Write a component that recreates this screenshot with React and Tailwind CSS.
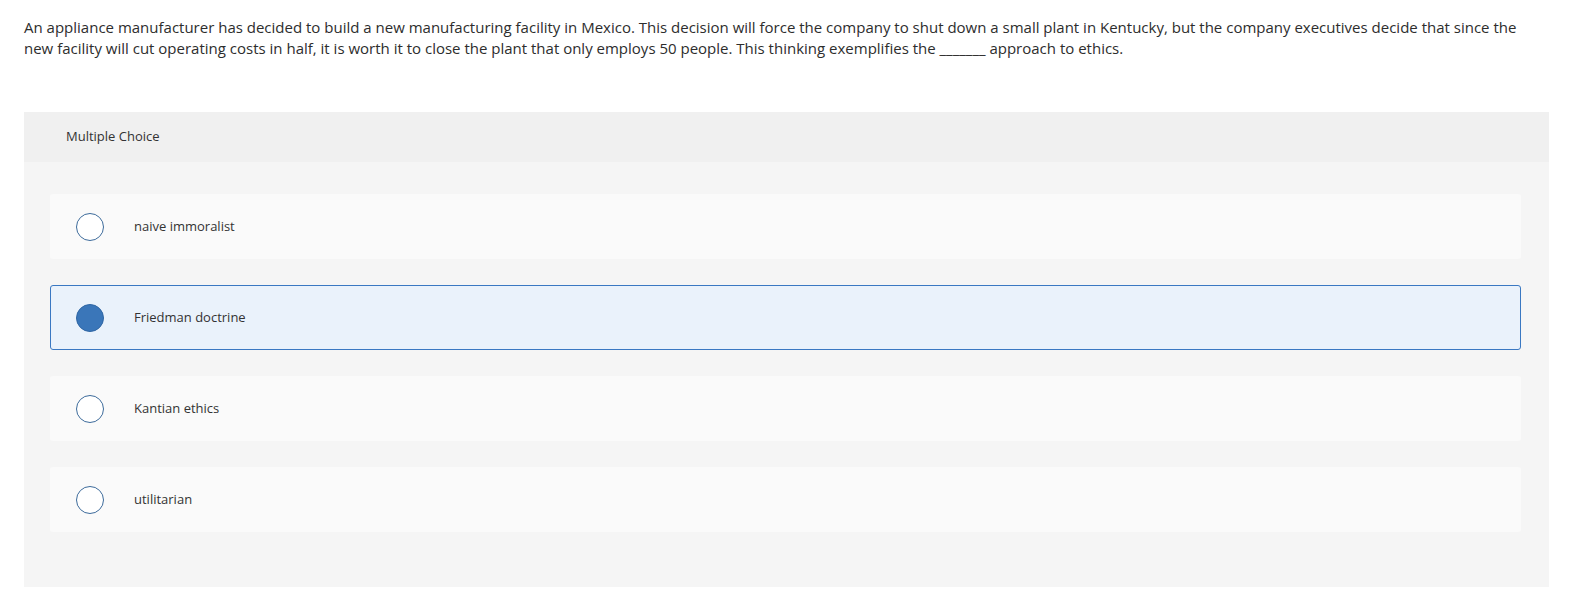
import React, { useState } from 'react';

const options = ['naive immoralist', 'Friedman doctrine', 'Kantian ethics', 'utilitarian'];

export default function App() {
  const [selected, setSelected] = useState(1);

  return (
    <div className="min-h-screen bg-white text-[#2d2d2d] pt-[17px] px-[24px]" style={{ fontFamily: '"Open Sans", Lato, sans-serif' }}>
      <p className="text-[15px] leading-[21px] w-[1510px]">
        An appliance manufacturer has decided to build a new manufacturing facility in Mexico. This decision will force the company to shut down a small plant in Kentucky, but the company executives decide that since the new facility will cut operating costs in half, it is worth it to close the plant that only employs 50 people. This thinking exemplifies the _______ approach to ethics.
      </p>

      <div className="mt-[53px] w-[1525px] bg-[#f5f5f5]">
        <div className="h-[50px] bg-[#f0f0f0] flex items-center pl-[42px] text-[13px] text-[#333]">
          Multiple Choice
        </div>
        <div className="pl-[26px] pr-[28px] pt-[32px] pb-[55px] flex flex-col gap-[26px]">
          {options.map((opt, i) => {
            const on = i === selected;
            return (
              <button
                key={opt}
                onClick={() => setSelected(i)}
                className={`h-[65px] flex items-center rounded-[3px] text-left pl-[25px] ${
                  on ? 'bg-[#eaf2fb] border border-[#3a78c2]' : 'bg-[#fafafa] border border-transparent'
                }`}
              >
                <span
                  className={`w-[28px] h-[28px] rounded-full shrink-0 ${
                    on ? 'bg-[#3a76b9] border border-[#2f66a4]' : 'bg-white border-[1.5px] border-[#3d6b9b]'
                  }`}
                />
                <span className="ml-[30px] text-[13px] text-[#333]">{opt}</span>
              </button>
            );
          })}
        </div>
      </div>
    </div>
  );
}
